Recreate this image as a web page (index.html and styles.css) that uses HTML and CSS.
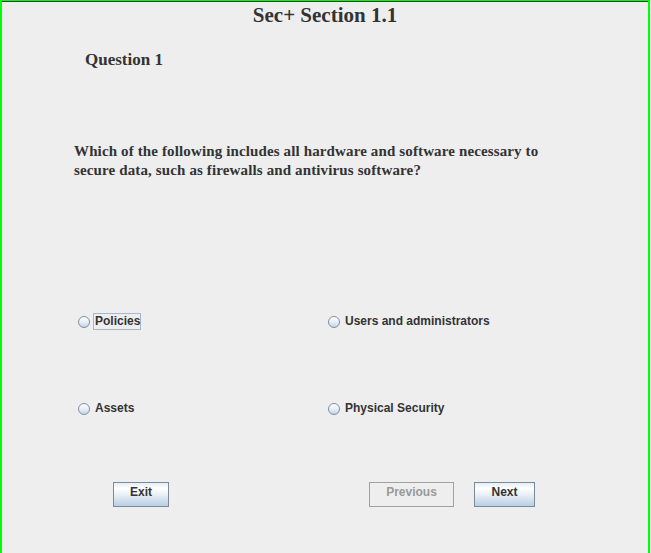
FILE: index.html
```html
<!DOCTYPE html>
<html>
<head>
<meta charset="utf-8">
<title>Sec+ Section 1.1</title>
<link rel="stylesheet" href="styles.css">
</head>
<body>
<div class="frame">
  <h1 class="title">Sec+ Section 1.1</h1>
  <h2 class="qnum">Question 1</h2>
  <p class="question">Which of the following includes all hardware and software necessary to secure data, such as firewalls and antivirus software?</p>
  <div class="options">
    <label class="option"><span class="radio"></span><span class="label focused">Policies</span></label>
    <label class="option"><span class="radio"></span><span class="label">Users and administrators</span></label>
    <label class="option"><span class="radio"></span><span class="label">Assets</span></label>
    <label class="option"><span class="radio"></span><span class="label">Physical Security</span></label>
  </div>
  <div class="buttons">
    <button class="btn btn-exit">Exit</button>
    <button class="btn btn-prev" disabled>Previous</button>
    <button class="btn btn-next">Next</button>
  </div>
</div>
</body>
</html>
```
FILE: styles.css
```css
html, body {
  margin: 0;
  padding: 0;
  background: #eeeeee;
}
.frame {
  width: 650px;
  height: 553px;
  box-sizing: border-box;
  border-left: 2px solid #00ff00;
  border-right: 2px solid #00ff00;
  border-top: 1px solid #00ff00;
  box-shadow: inset 0 1px 0 #3c3c3c;
  background: #eeeeee;
  color: #333333;
  overflow: hidden;
}
.title {
  margin: 2px 0 0 0;
  font-family: "Liberation Serif", "Times New Roman", serif;
  font-weight: bold;
  font-size: 21px;
  line-height: 24px;
  text-align: center;
}
.qnum {
  margin: 23px 0 0 83px;
  font-family: "Liberation Serif", "Times New Roman", serif;
  font-weight: bold;
  font-size: 17px;
  line-height: 20px;
}
.question {
  margin: 72px 0 0 72px;
  width: 490px;
  font-family: "Liberation Serif", "Times New Roman", serif;
  font-weight: bold;
  font-size: 15px;
  line-height: 19px;
  letter-spacing: 0.13px;
}
.options {
  margin: 133px 0 0 76px;
  display: grid;
  grid-template-columns: 250px 250px;
  row-gap: 70px;
}
.option {
  display: flex;
  align-items: center;
  height: 17px;
  font-family: "Liberation Sans", Arial, sans-serif;
  font-weight: bold;
  font-size: 12px;
}
.radio {
  width: 12px;
  height: 12px;
  box-sizing: border-box;
  border-radius: 50%;
  border: 1px solid #7f8fa0;
  background: linear-gradient(to bottom, #ffffff 0%, #e8eff7 50%, #c2d4e7 100%);
  margin-right: 3px;
}
.label {
  border: 1px solid transparent;
  padding: 0 0 0 1px;
  line-height: 15px;
}
.label.focused {
  border-color: #a3b8cc;
}
.buttons {
  margin: 65px 0 0 111px;
  display: flex;
}
.btn {
  height: 25px;
  box-sizing: border-box;
  border: 1px solid #7a8a99;
  background: linear-gradient(to bottom, #e6eef7 0%, #ffffff 25%, #e9f0f7 50%, #b8cfe5 100%);
  font-family: "Liberation Sans", Arial, sans-serif;
  font-weight: bold;
  font-size: 12px;
  color: #333333;
  line-height: 19px;
  padding: 0 0 4px 0;
  margin: 0;
}
.btn-exit { width: 56px; }
.btn-prev {
  width: 85px;
  margin-left: 200px;
  background: #eeeeee;
  border-color: #a0a0a0;
  color: #999999;
}
.btn-next {
  width: 61px;
  margin-left: 20px;
}
```
